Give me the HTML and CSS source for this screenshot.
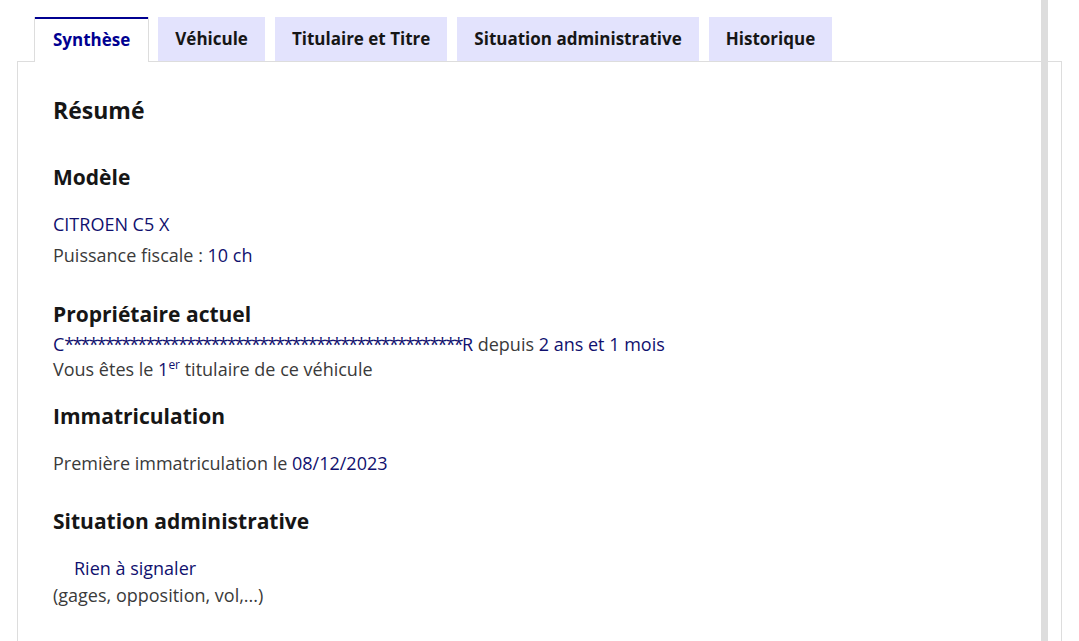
FILE: index.html
```html
<!DOCTYPE html>
<html lang="fr">
<head>
    <meta charset="UTF-8">
    <meta name="viewport" content="width=device-width, initial-scale=1.0">
    <title>Synthèse du véhicule</title>
    <link rel="stylesheet" href="styles.css">
</head>
<body>

    <div class="tabs">
        <!-- onglets -->
        <ul class="tabs-list">
            <li><button class="tab tab-active">Synthèse</button></li>
            <li><button class="tab">Véhicule</button></li>
            <li><button class="tab">Titulaire et Titre</button></li>
            <li><button class="tab">Situation administrative</button></li>
            <li><button class="tab">Historique</button></li>
        </ul>

        <!-- panneau de synthèse -->
        <div class="tab-panel">
            <h2 class="title">Résumé</h2>

            <section class="block block-model">
                <h3>Modèle</h3>
                <p class="value">CITROEN C5 X</p>
                <p class="line">Puissance fiscale : <span class="value">10 ch</span></p>
            </section>

            <section class="block block-owner">
                <h3>Propriétaire actuel</h3>
                <p class="line tight"><span class="value">C<span class="mask">*************************************************</span>R</span> depuis <span class="value">2 ans et 1 mois</span></p>
                <p class="line tight">Vous êtes le <span class="value">1<sup>er</sup></span> titulaire de ce véhicule</p>
            </section>

            <section class="block block-immat">
                <h3>Immatriculation</h3>
                <p class="line">Première immatriculation le <span class="value">08/12/2023</span></p>
            </section>

            <section class="block block-admin">
                <h3>Situation administrative</h3>
                <p class="status value">Rien à signaler</p>
                <p class="line">(gages, opposition, vol,...)</p>
            </section>
        </div>
    </div>

    <div class="side-bar"></div>

</body>
</html>
```

FILE: styles.css
```css
body {
    font-family: 'Open Sans', 'Liberation Sans', sans-serif;
    margin: 0;
    padding: 0;
    background-color: #fff;
    color: #3a3a3a;
    overflow: hidden;
}
.tabs {
    width: 1045px;
    margin: 17px 0 0 17px;
}
.tabs-list {
    list-style: none;
    display: flex;
    gap: 10px;
    margin: 0;
    padding: 0 0 0 18px;
}
.tab {
    font-family: inherit;
    font-size: 17px;
    font-weight: 700;
    color: #161616;
    background-color: #e3e3fd;
    border: none;
    height: 44px;
    padding: 0 17px 2px;
    cursor: pointer;
}
.tab-active {
    background-color: #fff;
    color: #000091;
    border-top: 2px solid #000091;
    box-shadow: -1px 0 0 #ddd, 1px 0 0 #ddd;
    height: 45px;
    padding: 0 18px 2px;
    margin-bottom: -1px;
    position: relative;
}
.tab-panel {
    box-sizing: border-box;
    height: 580px;
    border: 1px solid #ddd;
    border-bottom: none;
    padding: 32px 35px 0;
}
.title {
    font-size: 23px;
    font-weight: 700;
    color: #161616;
    margin: 0 0 37px;
}
.block h3 {
    font-size: 21px;
    font-weight: 700;
    color: #161616;
    margin: 0 0 18px;
}
.block p {
    font-size: 18px;
    margin: 0;
    line-height: 31px;
}
.value {
    color: #10106e;
}
.mask {
    letter-spacing: -1.8px;
}
.block-model {
    margin-bottom: 29px;
}
.block-owner h3 {
    margin-bottom: 4px;
}
.block-owner p.tight {
    line-height: 25px;
}
.block-owner {
    margin-bottom: 20px;
}
.block-immat {
    margin-bottom: 28px;
}
.block-admin h3 {
    margin-bottom: 20px;
}
.block p.status {
    padding-left: 21px;
    line-height: 27px;
}
.block-admin .line {
    line-height: 27px;
}
sup {
    font-size: 12px;
    line-height: 0;
}
.side-bar {
    position: fixed;
    top: 0;
    left: 1041px;
    width: 7px;
    height: 100%;
    background-color: #ddd;
}
```
